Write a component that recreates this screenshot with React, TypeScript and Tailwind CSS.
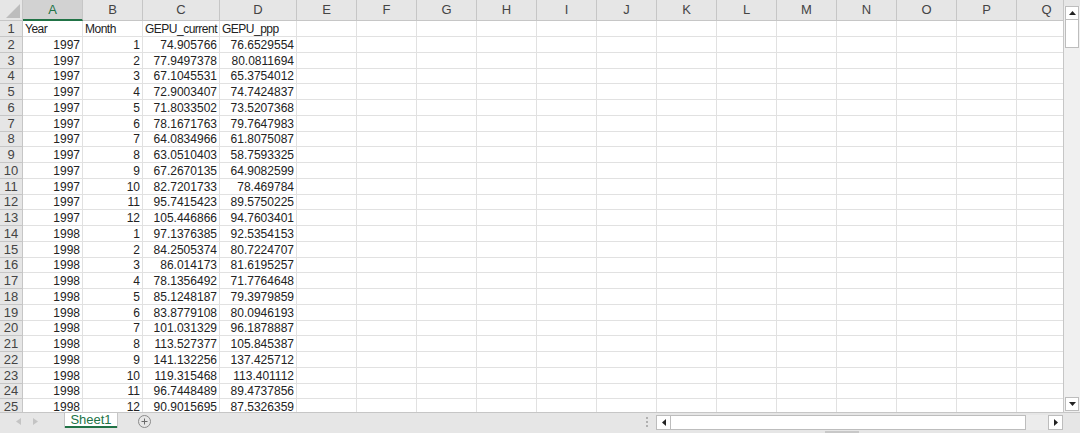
import React from 'react';

const rows: [string, string, string, string][] = [
  ['Year', 'Month', 'GEPU_current', 'GEPU_ppp'],
  ['1997', '1', '74.905766', '76.6529554'],
  ['1997', '2', '77.9497378', '80.0811694'],
  ['1997', '3', '67.1045531', '65.3754012'],
  ['1997', '4', '72.9003407', '74.7424837'],
  ['1997', '5', '71.8033502', '73.5207368'],
  ['1997', '6', '78.1671763', '79.7647983'],
  ['1997', '7', '64.0834966', '61.8075087'],
  ['1997', '8', '63.0510403', '58.7593325'],
  ['1997', '9', '67.2670135', '64.9082599'],
  ['1997', '10', '82.7201733', '78.469784'],
  ['1997', '11', '95.7415423', '89.5750225'],
  ['1997', '12', '105.446866', '94.7603401'],
  ['1998', '1', '97.1376385', '92.5354153'],
  ['1998', '2', '84.2505374', '80.7224707'],
  ['1998', '3', '86.014173', '81.6195257'],
  ['1998', '4', '78.1356492', '71.7764648'],
  ['1998', '5', '85.1248187', '79.3979859'],
  ['1998', '6', '83.8779108', '80.0946193'],
  ['1998', '7', '101.031329', '96.1878887'],
  ['1998', '8', '113.527377', '105.845387'],
  ['1998', '9', '141.132256', '137.425712'],
  ['1998', '10', '119.315468', '113.401112'],
  ['1998', '11', '96.7448489', '89.4737856'],
  ['1998', '12', '90.9015695', '87.5326359'],
];

const extraCols = ['E', 'F', 'G', 'H', 'I', 'J', 'K', 'L', 'M', 'N', 'O', 'P', 'Q'];

function Cell({ w, children, right, text }: { w: string; children?: React.ReactNode; right?: boolean; text?: boolean }) {
  return (
    <div
      className={`${w} shrink-0 h-full border-r border-b border-[#e1e1e1] px-[2px] flex items-center overflow-hidden whitespace-nowrap ${
        right ? 'justify-end' : 'justify-start'
      } ${text ? 'tracking-[-0.5px]' : ''}`}
    >
      {children}
    </div>
  );
}

export default function App() {
  return (
    <div
      className="w-[1080px] h-[433px] bg-white overflow-hidden flex flex-col text-[#222]"
      style={{ fontFamily: '"Liberation Sans", Arial, sans-serif' }}
    >
      {/* grid + vertical scrollbar */}
      <div className="flex h-[412px] shrink-0">
        <div className="w-[1063px] shrink-0 overflow-hidden flex flex-col">
          {/* column header */}
          <div className="flex h-[21px] shrink-0 bg-[#e6e6e6] text-[13px] text-[#444]">
            <div className="w-[23px] shrink-0 h-full border-r border-b border-[#c6c6c6] flex items-end justify-end p-[2px]">
              <svg width="14" height="14" viewBox="0 0 14 14">
                <polygon points="14,0 14,14 0,14" fill="#bdbdbd" />
              </svg>
            </div>
            <div className="w-[60px] shrink-0 h-full bg-[#d2d2d2] border-r border-[#c6c6c6] border-b-2 border-b-[#217346] flex items-center justify-center text-[#217346]">
              A
            </div>
            <div className="w-[60px] shrink-0 h-full border-r border-b border-[#c6c6c6] flex items-center justify-center">B</div>
            <div className="w-[77px] shrink-0 h-full border-r border-b border-[#c6c6c6] flex items-center justify-center">C</div>
            <div className="w-[77px] shrink-0 h-full border-r border-b border-[#c6c6c6] flex items-center justify-center">D</div>
            {extraCols.map((c) => (
              <div key={c} className="w-[60px] shrink-0 h-full border-r border-b border-[#c6c6c6] flex items-center justify-center">
                {c}
              </div>
            ))}
          </div>

          {rows.map((r, i) => (
            <div key={i} className={`flex shrink-0 text-[12px] ${i % 4 === 3 ? 'h-[15px]' : 'h-[16px]'}`}>
              <div className="w-[23px] shrink-0 h-full bg-[#e6e6e6] border-r border-b border-[#c6c6c6] flex items-center justify-center text-[13px] text-[#444]">
                {i + 1}
              </div>
              <Cell w="w-[60px]" right={i > 0} text={i === 0}>{r[0]}</Cell>
              <Cell w="w-[60px]" right={i > 0} text={i === 0}>{r[1]}</Cell>
              <Cell w="w-[77px]" right={i > 0} text={i === 0}>{r[2]}</Cell>
              <Cell w="w-[77px]" right={i > 0} text={i === 0}>{r[3]}</Cell>
              {extraCols.map((c) => (
                <Cell key={c} w="w-[60px]" />
              ))}
            </div>
          ))}
        </div>

        {/* vertical scrollbar */}
        <div className="w-[17px] shrink-0 flex flex-col bg-[#f0f0f0] border-l border-[#c6c6c6]">
          <div className="h-[6px] bg-[#e6e6e6]" />
          <div className="mx-[1px] h-[14px] bg-white border border-[#bdbdbd] flex items-center justify-center">
            <svg width="7" height="4" viewBox="0 0 7 4">
              <polygon points="3.5,0 7,4 0,4" fill="#222" />
            </svg>
          </div>
          <div className="mx-[1px] h-[28px] bg-white border border-t-0 border-[#bdbdbd]" />
          <div className="flex-1" />
          <div className="mx-[1px] mb-[1px] h-[14px] bg-white border border-[#bdbdbd] flex items-center justify-center">
            <svg width="7" height="4" viewBox="0 0 7 4">
              <polygon points="0,0 7,0 3.5,4" fill="#222" />
            </svg>
          </div>
        </div>
      </div>

      {/* bottom bar */}
      <div className="relative flex-1 bg-[#e6e6e6] border-t border-[#c6c6c6] flex items-start text-[13px]">
        <div className="w-[65px] shrink-0 flex items-center gap-[12px] pl-[16px] pt-[5px] text-[#c0c0c0]">
          <svg width="5" height="7" viewBox="0 0 5 7">
            <polygon points="5,0 5,7 0,3.5" fill="#c4c4c4" />
          </svg>
          <svg width="5" height="7" viewBox="0 0 5 7">
            <polygon points="0,0 0,7 5,3.5" fill="#c4c4c4" />
          </svg>
        </div>
        <div className="w-[52px] h-[15px] shrink-0 bg-white border-b-2 border-[#217346] flex items-center justify-center text-[#217346] shadow-[1px_0_0_#c6c6c6,-1px_0_0_#c6c6c6]">
          Sheet1
        </div>
        <div className="ml-[21px] mt-[2px] w-[13px] h-[13px] rounded-full border border-[#8a8a8a] flex items-center justify-center">
          <svg width="7" height="7" viewBox="0 0 7 7">
            <path d="M3.5 0.5v6M0.5 3.5h6" stroke="#6a6a6a" strokeWidth="1" />
          </svg>
        </div>
        <div className="flex-1" />
        <div className="flex flex-col gap-[2px] mt-[4px] mr-[8px]">
          <div className="w-[2px] h-[2px] bg-[#b0b0b0]" />
          <div className="w-[2px] h-[2px] bg-[#b0b0b0]" />
          <div className="w-[2px] h-[2px] bg-[#b0b0b0]" />
        </div>
        <div className="w-[407px] shrink-0 mt-[2px] flex h-[15px]">
          <div className="w-[15px] h-full bg-white border border-[#bdbdbd] flex items-center justify-center">
            <svg width="4" height="7" viewBox="0 0 4 7">
              <polygon points="4,0 4,7 0,3.5" fill="#222" />
            </svg>
          </div>
          <div className="w-[355px] h-full bg-white border border-l-0 border-[#bdbdbd]" />
          <div className="flex-1 bg-[#ececec]" />
          <div className="w-[15px] h-full bg-white border border-[#bdbdbd] flex items-center justify-center">
            <svg width="4" height="7" viewBox="0 0 4 7">
              <polygon points="0,0 0,7 4,3.5" fill="#222" />
            </svg>
          </div>
        </div>
        <div className="w-[17px] shrink-0" />
        <div className="absolute left-[825px] bottom-0 w-[34px] h-[2px] bg-[#c8c8c8]" />
      </div>
    </div>
  );
}
